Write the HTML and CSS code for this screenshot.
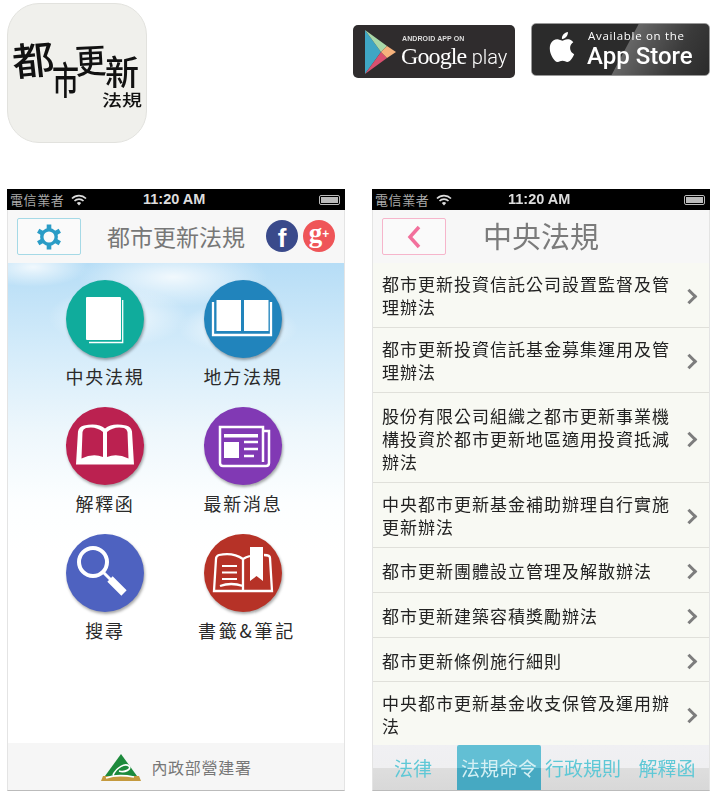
FILE: index.html
```html
<!DOCTYPE html>
<html lang="zh-Hant">
<head>
<meta charset="utf-8">
<title>都市更新法規</title>
<link rel="stylesheet" href="styles.css">
</head>
<body>
<header class="top">
  <div class="app-icon">
    <span class="brush b1">都</span><span class="brush b2">市</span><span class="brush b3">更</span><span class="brush b4">新</span><span class="brush-small">法規</span>
  </div>
  <div class="badges">
    <div class="badge play">
      <svg class="play-icon" viewBox="0 0 32 48" width="32" height="48">
        <polygon points="1,2 1,46 17,24" fill="#3fa6c4"/>
        <polygon points="1,2 17,24 23,18" fill="#a9d8a8"/>
        <polygon points="1,46 17,24 23,30" fill="#d9506f"/>
        <polygon points="17,24 23,18 32,24 23,30" fill="#f6b27c"/>
      </svg>
      <div class="badge-text">
        <span class="play-small">ANDROID APP ON</span>
        <span class="play-big"><span class="google">Google</span> <span class="gplay">play</span></span>
      </div>
    </div>
    <div class="badge store">
      <svg class="apple" viewBox="0 0 24 24" width="36" height="36"><path fill="#fff" d="M18.71 19.5c-.83 1.24-1.71 2.45-3.05 2.47-1.34.03-1.77-.79-3.29-.79-1.53 0-2 .77-3.27.82-1.31.05-2.3-1.32-3.14-2.53C4.25 17 2.94 12.45 4.7 9.39c.87-1.52 2.43-2.48 4.12-2.51 1.28-.02 2.5.87 3.29.87.78 0 2.26-1.07 3.81-.91.65.03 2.47.26 3.64 1.98-.09.06-2.17 1.28-2.15 3.81.03 3.02 2.65 4.03 2.68 4.04-.03.07-.42 1.44-1.38 2.83M13 3.5c.73-.83 1.94-1.46 2.94-1.5.13 1.17-.34 2.35-1.04 3.19-.69.85-1.83 1.51-2.95 1.42-.15-1.15.41-2.35 1.05-3.11z"/></svg>
      <div class="badge-text">
        <span class="store-small">Available on the</span>
        <span class="store-big">App Store</span>
      </div>
    </div>
  </div>
</header>

<main class="phones">
  <section class="phone">
    <div class="status">
      <span class="carrier">電信業者</span>
      <svg class="wifi" viewBox="0 0 16 12" width="16" height="12"><path d="M1 4.500a10 10 0 0 1 14 0M3.500 7a6.500 6.500 0 0 1 9 0" fill="none" stroke="#ddd" stroke-width="1.7"/><path d="M5.800 9a3.200 3.200 0 0 1 4.400 0L8 11.400z" fill="#ddd"/></svg>
      <span class="time">11:20 AM</span>
      <span class="battery"><i></i></span>
    </div>
    <div class="nav">
      <div class="nav-btn gear-btn">
        <svg viewBox="0 0 28 28" width="28" height="28">
          <g fill="none" stroke="#2a9cc6">
            <circle cx="14" cy="14" r="7.200" stroke-width="3.400"/>
            <path stroke-width="4.600" d="M14 1.500v5M14 21.500v5M3.200 7.800l4.300 2.500M20.500 17.700l4.300 2.500M3.200 20.200l4.300-2.500M20.500 10.300l4.300-2.500"/>
          </g>
        </svg>
      </div>
      <h1 class="home-title">都市更新法規</h1>
      <div class="social">
        <span class="soc fb">f</span>
        <span class="soc gp">g<small>+</small></span>
      </div>
    </div>
    <div class="home">
      <div class="cloud c1"></div><div class="cloud c2"></div><div class="cloud c3"></div><div class="cloud c4"></div>
      <div class="menu">
        <a class="item">
          <span class="circle teal">
            <svg viewBox="0 0 78 78" width="78" height="78">
              <path d="M56.700 20v42.500H23" fill="none" stroke="#fff" stroke-width="1.300"/>
              <rect x="20" y="17" width="35" height="43" rx="1" fill="#fff"/>
            </svg>
          </span>
          <span class="label">中央法規</span>
        </a>
        <a class="item">
          <span class="circle blue">
            <svg viewBox="0 0 78 78" width="78" height="78">
              <path d="M9 22v33h58v-33" fill="none" stroke="#fff" stroke-width="2.300"/>
              <path d="M12.500 20H37v31H12.500zM40 20h24.500v31H40z" fill="#fff"/>
            </svg>
          </span>
          <span class="label">地方法規</span>
        </a>
        <a class="item">
          <span class="circle crimson">
            <svg viewBox="0 0 78 78" width="78" height="78">
              <path d="M10 57.500l2-33q1-5 6-6q14-3 21 3q7-6 21-3q5 1 6 6l2 33zM15.500 51.500Q27 46 37 50V25q-7-6-17-4q-3 1-3.500 4zM62.500 51.500Q51 46 41 50V25q7-6 17-4q3 1 3.500 4z" fill="#fff" fill-rule="evenodd"/>
            </svg>
          </span>
          <span class="label">解釋函</span>
        </a>
        <a class="item">
          <span class="circle purple">
            <svg viewBox="0 0 78 78" width="78" height="78">
              <path d="M59 24h6v32q0 3-3 3H19q-3 0-3-3V20h43v35" fill="none" stroke="#fff" stroke-width="2.500"/>
              <rect x="20" y="27" width="34" height="3.500" fill="#fff"/>
              <rect x="20" y="35" width="15" height="16" fill="#fff"/>
              <path d="M40 35h14M40 42h14M40 49h10" stroke="#fff" stroke-width="2.500"/>
            </svg>
          </span>
          <span class="label">最新消息</span>
        </a>
        <a class="item">
          <span class="circle indigo">
            <svg viewBox="0 0 78 78" width="78" height="78">
              <circle cx="27" cy="28" r="14" fill="none" stroke="#fff" stroke-width="4"/>
              <path d="M37 38l8 8" stroke="#fff" stroke-width="3"/>
              <path d="M44 45l14 14" stroke="#fff" stroke-width="7.500"/>
            </svg>
          </span>
          <span class="label">搜尋</span>
        </a>
        <a class="item">
          <span class="circle brick">
            <svg viewBox="0 0 78 78" width="78" height="78">
              <path d="M46 22q-4 1-7 3q-10-7-24-4q-3 1-3 4l-2 32h58l-2-33q0-3-6-3M39 25v32M16 52q11-4 23 0" fill="none" stroke="#fff" stroke-width="2.300"/>
              <path d="M46 13h13v34l-6.500-5-6.500 5z" fill="#fff"/>
              <path d="M18 32h15M18 38.500h15M18 45h15" stroke="#fff" stroke-width="1.800"/>
            </svg>
          </span>
          <span class="label wide">書籤&amp;筆記</span>
        </a>
      </div>
      <footer class="foot">
        <svg viewBox="0 0 42 28" width="42" height="28">
          <polygon points="21,1 37,23 5,23" fill="#1d8a3c"/>
          <path d="M3 23h36l2 5H1z" fill="#c59a3e"/>
          <path d="M13 22c4-8 12-12 16-9 3 3-4 7-10 5M6 25c8-3 18-3 28-1" fill="none" stroke="#fff" stroke-width="1.700"/>
        </svg>
        <span>內政部營建署</span>
      </footer>
    </div>
  </section>

  <section class="phone">
    <div class="status">
      <span class="carrier">電信業者</span>
      <svg class="wifi" viewBox="0 0 16 12" width="16" height="12"><path d="M1 4.500a10 10 0 0 1 14 0M3.500 7a6.500 6.500 0 0 1 9 0" fill="none" stroke="#ddd" stroke-width="1.7"/><path d="M5.800 9a3.200 3.200 0 0 1 4.400 0L8 11.400z" fill="#ddd"/></svg>
      <span class="time">11:20 AM</span>
      <span class="battery"><i></i></span>
    </div>
    <div class="nav">
      <div class="nav-btn back-btn">
        <svg viewBox="0 0 16 24" width="16" height="24"><path d="M13 2L4 12l9 10" fill="none" stroke="#f2709c" stroke-width="3.500"/></svg>
      </div>
      <h1 class="list-title">中央法規</h1>
    </div>
    <ul class="list">
      <li class="h65"><span>都市更新投資信託公司設置監督及管理辦法</span></li>
      <li class="h65"><span>都市更新投資信託基金募集運用及管理辦法</span></li>
      <li class="h90"><span>股份有限公司組織之都市更新事業機構投資於都市更新地區適用投資抵減辦法</span></li>
      <li class="h65"><span>中央都市更新基金補助辦理自行實施更新辦法</span></li>
      <li class="h45"><span>都市更新團體設立管理及解散辦法</span></li>
      <li class="h45"><span>都市更新建築容積獎勵辦法</span></li>
      <li class="h44"><span>都市更新條例施行細則</span></li>
      <li class="h63"><span>中央都市更新基金收支保管及運用辦法</span></li>
    </ul>
    <nav class="tabs">
      <a class="tab first">法律</a>
      <a class="tab active">法規命令</a>
      <a class="tab">行政規則</a>
      <a class="tab">解釋函</a>
    </nav>
  </section>
</main>
</body>
</html>
```
FILE: styles.css
```css
* { box-sizing: border-box; }
html, body { margin: 0; padding: 0; background: #fff; }
body {
  width: 724px;
  height: 804px;
  overflow: hidden;
  font-family: "Noto Sans CJK TC", "Noto Sans", sans-serif;
}
.top, .phones { filter: blur(.35px); }
.top {
  display: flex;
  height: 189px;
  padding: 3px 0 0 7px;
}
.app-icon {
  position: relative;
  width: 140px;
  height: 140px;
  border-radius: 32px;
  background: #f0f0ec;
  border: 1px solid #e2e2de;
  color: #111;
}
.brush { position: absolute; font-weight: 500; line-height: 1; }
.b1 { left: 4px; top: 33px; font-size: 42px; transform: scaleY(.92) rotate(-6deg); }
.b2 { left: 44px; top: 60px; font-size: 27px; transform: scaleY(1.4); }
.b3 { left: 67px; top: 39px; font-size: 31px; transform: rotate(-3deg) scaleY(1.1); }
.b4 { left: 97px; top: 50px; font-size: 34px; }
.brush-small {
  position: absolute;
  left: 94px;
  top: 86px;
  font-size: 20px;
  font-weight: 500;
  line-height: 20px;
  white-space: nowrap;
  transform: scaleY(.8);
}
.badges {
  display: flex;
  align-items: flex-start;
  gap: 16px;
  margin-left: 206px;
  padding-top: 20px;
}
.badge { display: flex; color: #fff; }
.badge-text { display: flex; flex-direction: column; }
.play {
  width: 162px;
  height: 53px;
  margin-top: 2px;
  background: #2f2c2d;
  border-radius: 5px;
  padding: 3px 0 0 11px;
}
.play-icon { flex: none; }
.play-small {
  margin: 6px 0 0 6px;
  font: 700 7px/9px "Liberation Sans", sans-serif;
  letter-spacing: .1px;
  color: #ddd;
}
.play-big {
  margin: -1px 0 0 5px;
  line-height: 28px;
  white-space: nowrap;
}
.google {
  font: 400 24px/28px "Liberation Serif", serif;
  letter-spacing: -.9px;
}
.gplay {
  margin-left: 2px;
  font: 300 20px/28px "Roboto", sans-serif;
  letter-spacing: -.1px;
}
.store {
  width: 179px;
  height: 53px;
  background: linear-gradient(118deg, #2b2b2b 52%, #666 52.500%, #3a3a3a 80%, #2b2b2b);
  border: 1px solid #999;
  border-radius: 5px;
  padding: 5px 0 0 12px;
}
.apple { flex: none; }
.store-small {
  margin: 0 0 0 8px;
  font: 400 11.500px/13px "Open Sans", sans-serif;
  letter-spacing: .7px;
  white-space: nowrap;
}
.store-big {
  margin: 0 0 0 7px;
  font: 500 24px/28px "Roboto", sans-serif;
  white-space: nowrap;
}

.phones {
  display: flex;
  gap: 27px;
  padding-left: 7px;
}
.phone {
  position: relative;
  width: 338px;
  height: 602px;
  display: flex;
  flex-direction: column;
  border-left: 1px solid #e4e4e4;
  border-right: 1px solid #e4e4e4;
  border-bottom: 1px solid #bbb;
}
.status {
  position: relative;
  flex: none;
  height: 21px;
  margin: 0 -1px;
  background: #000;
  display: flex;
  align-items: center;
  padding: 0 5px 0 3px;
  color: #c9c9c9;
}
.carrier { font-size: 13px; letter-spacing: .6px; line-height: 21px; color: #aaa; }
.wifi { margin-left: 7px; }
.time {
  position: absolute;
  left: 136px;
  font: 700 14.500px/21px "Liberation Sans", sans-serif;
  color: #ddd;
}
.battery {
  margin-left: auto;
  width: 21px;
  height: 10px;
  border: 1px solid #bbb;
  border-radius: 2px;
  padding: 1px;
}
.battery i { display: block; height: 100%; background: #bbb; }
.nav {
  flex: none;
  height: 53px;
  background: #f7f7f7;
  display: flex;
  align-items: flex-start;
  padding: 8px 0 0 9px;
}
.nav-btn {
  flex: none;
  width: 64px;
  height: 37px;
  border-radius: 2px;
  display: flex;
  align-items: center;
  justify-content: center;
  background: #fafafa;
}
.gear-btn { border: 1px solid #a5d9e6; }
.back-btn { border: 1px solid #f6b5cb; }
.home-title, .list-title { margin: 0; font-weight: 400; color: #777; white-space: nowrap; }
.home-title { font-size: 23px; line-height: 37px; margin-left: 26px; }
.list-title { font-size: 29px; line-height: 34px; margin-left: 37px; color: #7b7b7b; }
.social { display: flex; gap: 5px; margin-left: 21px; margin-top: 2px; }
.soc {
  width: 32px;
  height: 32px;
  border-radius: 50%;
  color: #fff;
  display: flex;
  align-items: center;
  justify-content: center;
  font-weight: 700;
}
.fb { background: #3a4a8b; font: 700 26px/32px "Liberation Sans", sans-serif; padding-top: 3px; }
.gp { background: #ef5558; font: 700 27px/32px "Liberation Serif", serif; padding-bottom: 6px; }
.gp small { font: 700 12px "Liberation Sans", sans-serif; margin-top: 2px; }

.home {
  position: relative;
  flex: 1;
  display: flex;
  flex-direction: column;
  overflow: hidden;
  background: linear-gradient(#b6ddf6 0, #d5ecfa 90px, #eef7fc 170px, #fcfeff 240px, #fff 290px);
}
.cloud { position: absolute; border-radius: 50%; background: radial-gradient(closest-side, rgba(255,255,255,.8), rgba(255,255,255,0)); }
.c1 { left: -30px; top: -16px; width: 110px; height: 40px; }
.c2 { left: 70px; top: -16px; width: 190px; height: 60px; }
.c3 { left: 40px; top: 24px; width: 140px; height: 60px; }
.c4 { left: 170px; top: 40px; width: 120px; height: 50px; }
.menu {
  position: relative;
  flex: 1;
  display: grid;
  grid-template-columns: 138px 138px;
  grid-auto-rows: 127px;
  padding: 17px 0 0 28px;
}
.item { display: flex; flex-direction: column; align-items: center; }
.circle {
  width: 78px;
  height: 78px;
  border-radius: 50%;
  flex: none;
  box-shadow: 1px 2px 3px rgba(0,0,0,.35);
  display: block;
}
.circle svg { display: block; }
.teal { background: #10ac9c; }
.blue { background: #2184bc; }
.crimson { background: #bb2150; }
.purple { background: #8139b4; }
.indigo { background: #4e62c0; }
.brick { background: #b63227; }
.label {
  margin-top: 5px;
  font-size: 18px;
  line-height: 26px;
  letter-spacing: 1.700px;
  color: #2a2a2a;
  white-space: nowrap;
}
.label.wide { letter-spacing: 2.800px; margin-left: 8px; }
.foot {
  flex: none;
  height: 47px;
  background: #f6f6f6;
  display: flex;
  align-items: center;
  justify-content: center;
  gap: 9px;
  font-size: 16px;
  letter-spacing: .7px;
  color: #777;
}
.list {
  flex: 1;
  margin: 0;
  padding: 0;
  list-style: none;
  background: #f8f9f3;
}
.list li {
  position: relative;
  display: flex;
  align-items: center;
  padding: 1px 30px 0 9px;
  font-size: 17px;
  letter-spacing: 1px;
  line-height: 23px;
  color: #222;
  border-bottom: 1px solid #e0e0da;
}
.list li span { display: block; width: 290px; }
.list li::after {
  content: "";
  position: absolute;
  right: 14px;
  top: 50%;
  width: 8px;
  height: 8px;
  margin-top: -4px;
  border-top: 3px solid #7d7d7d;
  border-right: 3px solid #7d7d7d;
  transform: rotate(45deg);
}
.list li.h65 { height: 65px; padding-top: 0; }
.h90 { height: 90px; }
.h45 { height: 45px; }
.h44 { height: 44px; }
.h63 { height: 63px; border-bottom: 0 !important; }
.tabs {
  flex: none;
  height: 45px;
  display: flex;
  background: linear-gradient(#f0f0f3 0, #efeff1 50%, #dedede 50%, #d8d8d8 100%);
  color: #5fc8d6;
  font-size: 19px;
  line-height: 45px;
  white-space: nowrap;
}
.tab { flex: none; display: block; width: 84px; text-align: center; }
.tab.first { padding-right: 4px; }
.tab.active { background: linear-gradient(#62bfd4 50%, #46a9c2 50%); color: #d5f0f4; border-radius: 2px 2px 0 0; }
```
